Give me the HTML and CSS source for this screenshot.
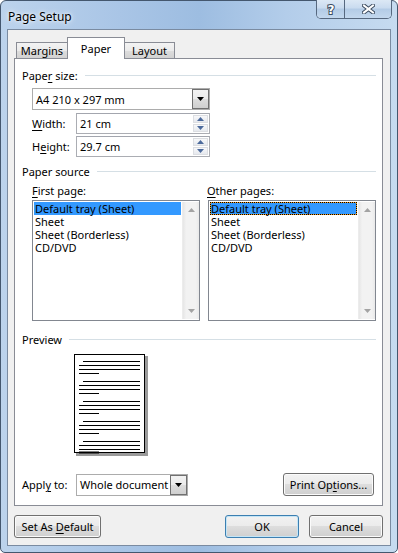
FILE: index.html
```html
<!DOCTYPE html>
<html lang="en">
<head>
    <meta charset="UTF-8">
    <title>Page Setup</title>
    <link rel="stylesheet" href="styles.css">
</head>
<body>
    <div class="window">
        <div class="titlebar">
            <span class="title">Page Setup</span>
            <div class="caption">
                <div class="cap help">
                    <svg width="10" height="13" viewBox="0 0 10 13">
                        <text x="5" y="11" text-anchor="middle" class="help-glyph">?</text>
                    </svg>
                </div>
                <div class="cap close">
                    <svg width="13" height="10" viewBox="0 0 13 10">
                        <path d="M2 1.5 L11 8.5 M11 1.5 L2 8.5" stroke="#3b4b5f" stroke-width="4" stroke-linecap="square"/>
                        <path d="M2 1.5 L11 8.5 M11 1.5 L2 8.5" stroke="#fff" stroke-width="2" stroke-linecap="square"/>
                    </svg>
                </div>
            </div>
        </div>

        <div class="client">
            <div class="tabs">
                <div class="tab tab-margins">Margins</div>
                <div class="tab tab-paper active">Paper</div>
                <div class="tab tab-layout">Layout</div>
            </div>

            <div class="panel">
                <div class="group first"><span>Pape<u>r</u> size:</span><i class="rule"></i></div>

                <div class="combo size-combo">
                    <span class="combo-val">A4 210 x 297 mm</span>
                    <span class="drop"><svg width="7" height="4" viewBox="0 0 7 4"><path d="M0 0h7L3.5 4z" fill="#000"/></svg></span>
                </div>

                <div class="field">
                    <label><u>W</u>idth:</label>
                    <div class="spin">
                        <span class="spin-val">21 cm</span>
                        <span class="spin-btns">
                            <b><svg width="7" height="4" viewBox="0 0 7 4"><path d="M0 4h7L3.5 0z" fill="#4c6a9c"/></svg></b>
                            <b><svg width="7" height="4" viewBox="0 0 7 4"><path d="M0 0h7L3.5 4z" fill="#4c6a9c"/></svg></b>
                        </span>
                    </div>
                </div>
                <div class="field field-2">
                    <label>H<u>e</u>ight:</label>
                    <div class="spin">
                        <span class="spin-val">29.7 cm</span>
                        <span class="spin-btns">
                            <b><svg width="7" height="4" viewBox="0 0 7 4"><path d="M0 4h7L3.5 0z" fill="#4c6a9c"/></svg></b>
                            <b><svg width="7" height="4" viewBox="0 0 7 4"><path d="M0 0h7L3.5 4z" fill="#4c6a9c"/></svg></b>
                        </span>
                    </div>
                </div>

                <div class="group source"><span>Paper source</span><i class="rule"></i></div>

                <div class="lists">
                    <div class="list-col">
                        <div class="list-label"><u>F</u>irst page:</div>
                        <div class="listbox">
                            <div class="items">
                                <div class="item selected">Default tray (Sheet)</div>
                                <div class="item">Sheet</div>
                                <div class="item">Sheet (Borderless)</div>
                                <div class="item">CD/DVD</div>
                            </div>
                            <div class="scrollbar">
                                <svg width="7" height="4" viewBox="0 0 7 4"><path d="M0 4h7L3.5 0z" fill="#a3a3a3"/></svg>
                                <svg width="7" height="4" viewBox="0 0 7 4"><path d="M0 0h7L3.5 4z" fill="#a3a3a3"/></svg>
                            </div>
                        </div>
                    </div>
                    <div class="list-col">
                        <div class="list-label"><u>O</u>ther pages:</div>
                        <div class="listbox">
                            <div class="items">
                                <div class="item selected focused">Default tray (Sheet)</div>
                                <div class="item">Sheet</div>
                                <div class="item">Sheet (Borderless)</div>
                                <div class="item">CD/DVD</div>
                            </div>
                            <div class="scrollbar">
                                <svg width="7" height="4" viewBox="0 0 7 4"><path d="M0 4h7L3.5 0z" fill="#a3a3a3"/></svg>
                                <svg width="7" height="4" viewBox="0 0 7 4"><path d="M0 0h7L3.5 4z" fill="#a3a3a3"/></svg>
                            </div>
                        </div>
                    </div>
                </div>

                <div class="group preview-head"><span>Preview</span><i class="rule"></i></div>

                <div class="preview">
                    <svg width="74" height="102" viewBox="0 0 74 102">
                        <rect x="2" y="2" width="72" height="100" fill="#9a9a9a"/>
                        <rect x="0.5" y="0.5" width="70" height="98" fill="#fff" stroke="#000"/>
                        <g stroke="#000" stroke-width="1">
                            <path d="M9 7.5h57M5 11.5h61M5 15.5h61M5 19.5h20"/>
                            <path d="M9 27.5h57M5 31.5h61M5 35.5h61M5 39.5h20"/>
                            <path d="M9 47.5h57M5 51.5h61M5 55.5h61M5 59.5h20"/>
                            <path d="M9 67.5h57M5 71.5h61M5 75.5h61M5 79.5h20"/>
                            <path d="M9 87.5h57M5 91.5h61M5 95.5h61"/>
                        </g>
                        <path d="M5 98.5h20" stroke="#000" stroke-width="2"/>
                    </svg>
                </div>

                <div class="apply">
                    <label>Appl<u>y</u> to:</label>
                    <div class="combo apply-combo">
                        <span class="combo-val">Whole document</span>
                        <span class="drop"><svg width="7" height="4" viewBox="0 0 7 4"><path d="M0 0h7L3.5 4z" fill="#000"/></svg></span>
                    </div>
                    <button class="btn print-btn">Print Op<u>t</u>ions...</button>
                </div>
            </div>

            <div class="footer">
                <button class="btn default-btn">Set As <u>D</u>efault</button>
                <button class="btn ok-btn">OK</button>
                <button class="btn cancel-btn">Cancel</button>
            </div>
        </div>
    </div>
</body>
</html>
```

FILE: styles.css
```css
body {
    margin: 0;
    font-family: "Noto Sans", sans-serif;
    font-size: 11px;
    color: #000;
    background: #fff;
}
u {
    text-decoration-thickness: 1px;
    text-underline-offset: 2px;
}
.window {
    width: 398px;
    height: 553px;
    box-sizing: border-box;
    border: 1px solid #44576e;
    border-radius: 6px 6px 5px 5px;
    padding: 0 6px 6px;
    background: linear-gradient(to right, #bcd3ec 0%, #a9c5e6 30%, #9dbde1 50%, #b3cdea 72%, #c6dbf0 100%);
    display: flex;
    flex-direction: column;
}
.titlebar {
    height: 28px;
    display: flex;
    justify-content: space-between;
    align-items: flex-start;
}
.title {
    align-self: center;
    padding-left: 1px;
    margin-top: 2px;
    font-size: 12px;
    text-shadow: 0 0 6px rgba(255, 255, 255, 0.9), 0 0 3px rgba(255, 255, 255, 0.9);
}
.caption {
    display: flex;
    height: 19px;
    width: 76px;
    margin-top: -1px;
    margin-right: -1px;
    box-sizing: border-box;
    border: 1px solid #56687f;
    border-top: none;
    border-radius: 0 0 5px 5px;
    overflow: hidden;
    box-shadow: inset 0 0 0 1px rgba(255, 255, 255, 0.5);
}
.cap {
    display: flex;
    align-items: center;
    justify-content: center;
    background: linear-gradient(#dce8f5, #c9dbef 45%, #b3cbe6 50%, #c3d8ee);
}
.help {
    width: 27px;
    border-right: 1px solid #56687f;
}
.help-glyph {
    font-family: "DejaVu Sans", sans-serif;
    font-weight: bold;
    font-size: 12px;
    fill: #fff;
    stroke: #3b4b5f;
    stroke-width: 2px;
    paint-order: stroke;
}
.close {
    flex: 1;
}
.client {
    flex: 1;
    border: 1px solid #7a8ba1;
    background: #f0f0f0;
    padding: 0 7px 0 6px;
    display: flex;
    flex-direction: column;
}
.tabs {
    display: flex;
    align-items: flex-end;
    height: 28px;
    padding-left: 2px;
}
.tab {
    box-sizing: border-box;
    height: 16px;
    border: 1px solid #898c95;
    border-bottom: none;
    background: linear-gradient(#f3f3f3, #ebebeb 50%, #dddddd 51%, #d2d2d2);
    text-align: center;
    line-height: 15px;
}
.tab-margins {
    width: 52px;
}
.tab-paper {
    width: 58px;
    margin-left: -1px;
}
.tab-layout {
    width: 51px;
    margin-left: -1px;
}
.tab.active {
    height: 22px;
    background: #fff;
    position: relative;
    z-index: 1;
    margin-bottom: -1px;
    line-height: 22px;
}
.panel {
    box-sizing: border-box;
    height: 448px;
    border: 1px solid #898c95;
    background: #fff;
    padding: 0 6px 0 7px;
}
.group {
    display: flex;
    align-items: center;
    height: 15px;
}
.group .rule {
    flex: 1;
    height: 1px;
    background: #d5dfe5;
    margin-left: 7px;
}
.group.first {
    margin-top: 9px;
}
.combo {
    box-sizing: border-box;
    height: 22px;
    border: 1px solid #acacac;
    background: #fff;
    display: flex;
    align-items: center;
}
.combo-val {
    flex: 1;
    padding-left: 3px;
    white-space: nowrap;
}
.drop {
    box-sizing: border-box;
    width: 17px;
    height: 20px;
    border: 1px solid #707070;
    background: linear-gradient(#f2f2f2, #ebebeb 50%, #dddddd 51%, #cfcfcf);
    display: flex;
    align-items: center;
    justify-content: center;
}
.size-combo {
    width: 178px;
    margin: 5px 0 0 10px;
}
.field {
    display: flex;
    align-items: center;
    margin: 3px 0 0 10px;
}
.field-2 {
    margin-top: 2px;
}
.field label {
    width: 44px;
}
.spin {
    box-sizing: border-box;
    width: 134px;
    height: 21px;
    border: 1px solid #abadb3;
    border-top-color: #a3a6ae;
    display: flex;
    align-items: center;
}
.spin-val {
    flex: 1;
    padding-left: 3px;
}
.spin-btns {
    display: flex;
    flex-direction: column;
    gap: 1px;
    margin-right: 1px;
}
.spin-btns b {
    box-sizing: border-box;
    width: 15px;
    height: 8px;
    border: 1px solid #dcdee2;
    background: linear-gradient(#f7f8fa, #e6e9ee);
    display: flex;
    align-items: center;
    justify-content: center;
}
.group.source {
    margin-top: 7px;
}
.lists {
    display: flex;
    gap: 8px;
    margin: 4px 0 0 10px;
}
.list-col {
    width: 168px;
}
.list-label {
    height: 15px;
    line-height: 15px;
    margin-bottom: 2px;
}
.list-col + .list-col .list-label {
    margin-left: -1px;
}
.listbox {
    box-sizing: border-box;
    height: 121px;
    border: 1px solid #828790;
    display: flex;
}
.items {
    flex: 1;
    padding: 1px 1px 0 1px;
}
.item {
    height: 13px;
    line-height: 13px;
    padding-left: 1px;
    white-space: nowrap;
}
.item.selected {
    background: #3399ff;
}
.item.focused {
    box-sizing: border-box;
    border: 1px dotted #000;
    padding-left: 0;
    line-height: 11px;
    background: linear-gradient(#3399ff, #3399ff) padding-box, #f39a1c border-box;
}
.scrollbar {
    width: 17px;
    margin: 1px 0;
    background: linear-gradient(to right, #e6e6e6, #f2f2f2 20%, #f2f2f2 80%, #e9e9e9);
    border-left: 1px solid #ececec;
    display: flex;
    flex-direction: column;
    justify-content: space-between;
    align-items: center;
    padding: 6px 0;
    box-sizing: border-box;
}
.preview-head {
    margin-top: 11px;
}
.preview {
    margin: 7px 0 0 52px;
    height: 102px;
}
.preview svg {
    display: block;
}
.apply {
    display: flex;
    align-items: center;
    margin-top: 17px;
}
.apply label {
    width: 54px;
}
.apply-combo {
    width: 112px;
}
.btn {
    box-sizing: border-box;
    height: 23px;
    border: 1px solid #707070;
    border-radius: 3px;
    background: linear-gradient(#f2f2f2, #ebebeb 49%, #dddddd 50%, #cfcfcf);
    box-shadow: inset 0 0 0 1px #fbfbfb;
    font-family: inherit;
    font-size: 11px;
    color: #000;
    padding: 0;
}
.print-btn {
    width: 91px;
    margin: 0 2px 0 auto;
}
.footer {
    display: flex;
    gap: 10px;
    margin-top: 9px;
}
.default-btn {
    width: 87px;
}
.ok-btn {
    width: 74px;
    margin-left: auto;
    border-color: #3c7fb1;
    box-shadow: inset 0 0 0 1px #c4e5f6;
}
.cancel-btn {
    width: 74px;
}
```
